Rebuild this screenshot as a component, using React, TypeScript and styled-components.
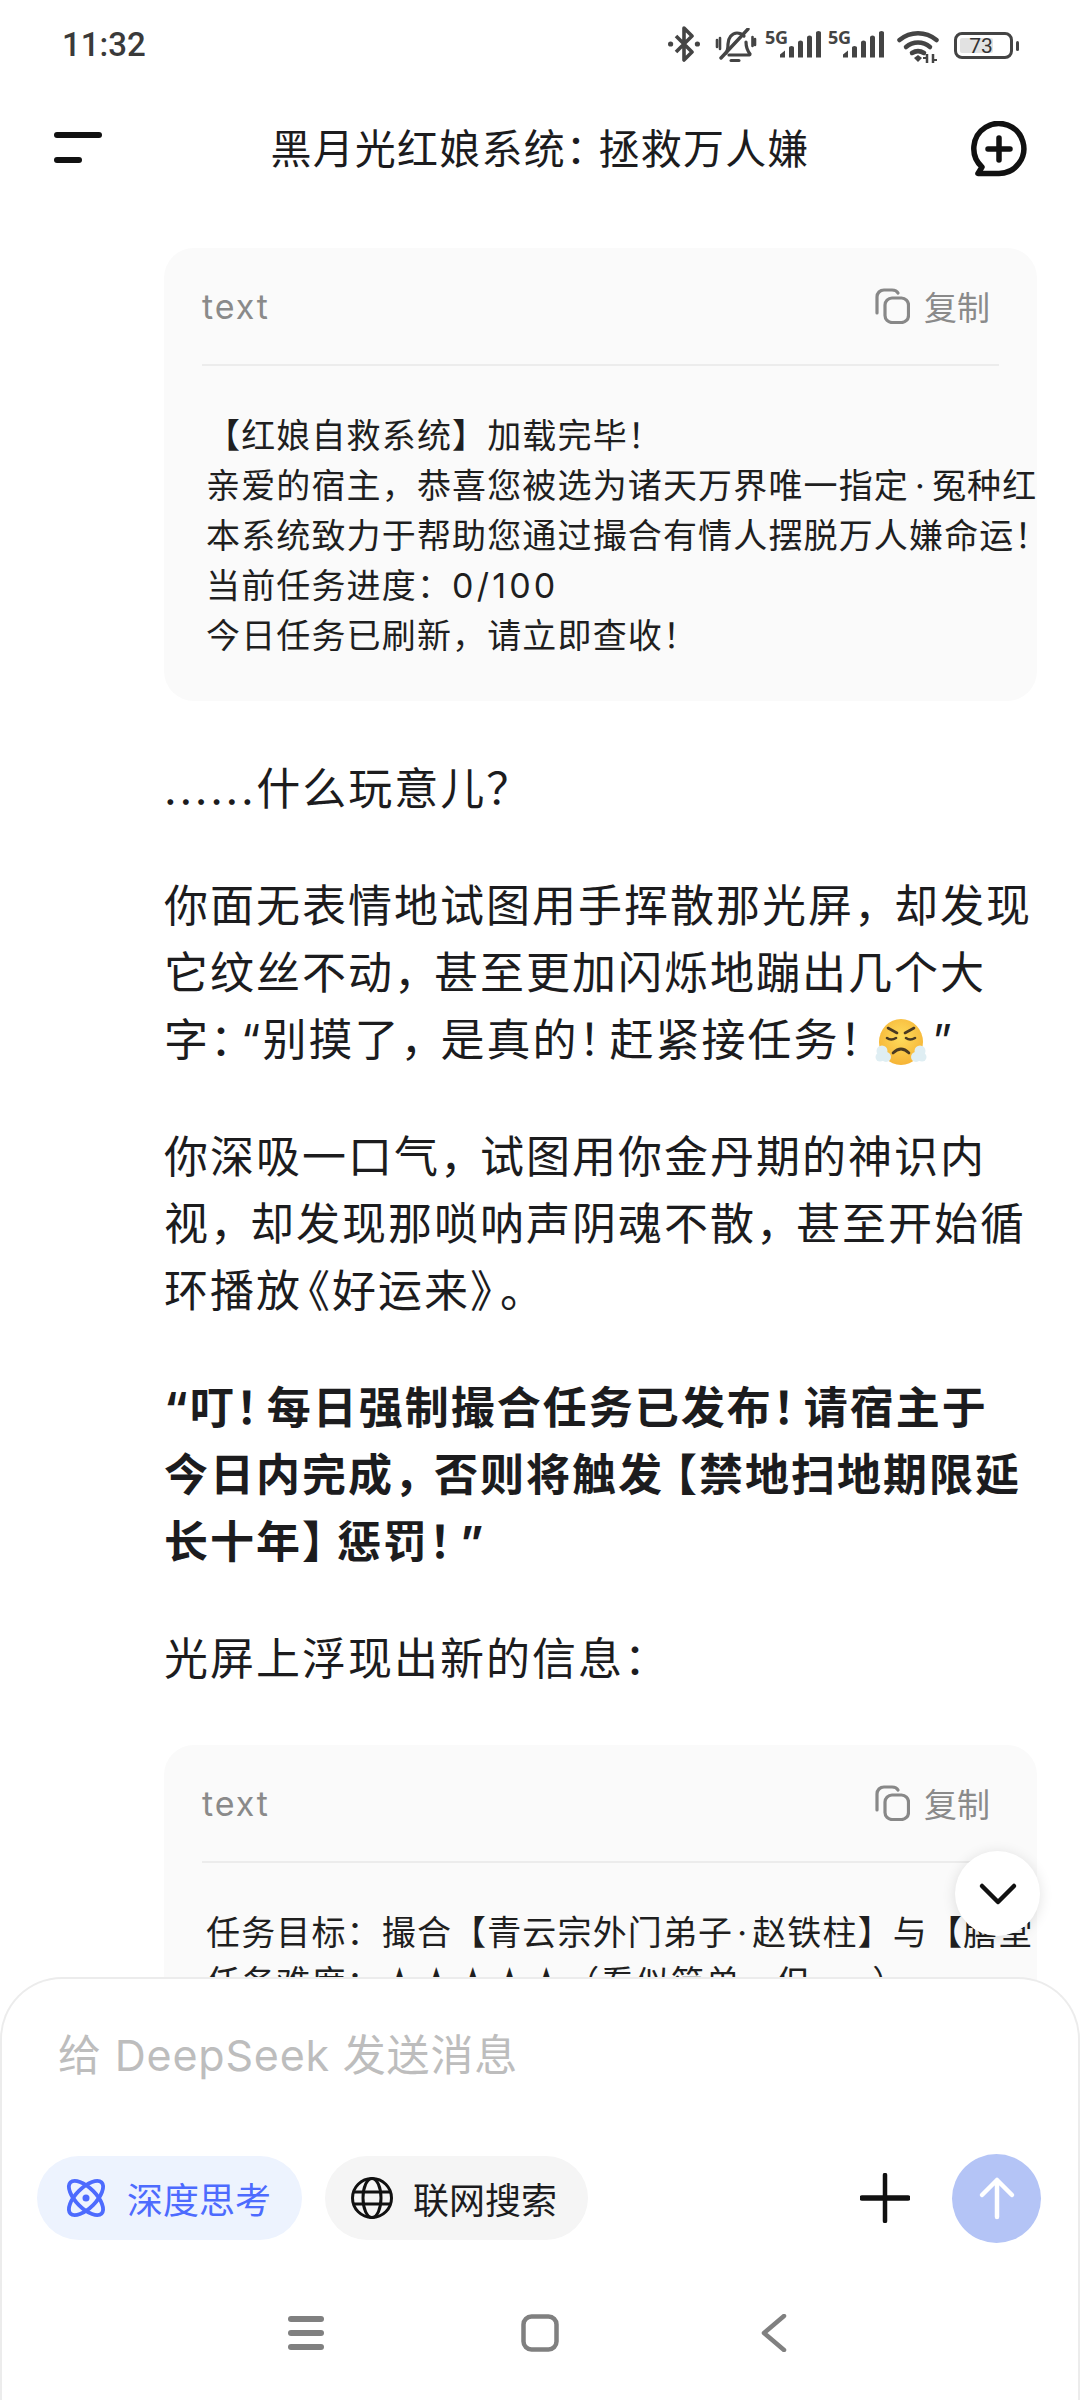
import React from "react";
import styled, { createGlobalStyle } from "styled-components";

const Global = createGlobalStyle`
  html, body { margin: 0; padding: 0; background: #fff; }
  * { box-sizing: border-box; }
  body { font-family: Inter, "Noto Sans CJK SC", sans-serif; }
`;

const Screen = styled.div`
  position: relative;
  width: 1080px;
  height: 2400px;
  overflow: hidden;
  background: #fff;
  color: #1c1c1e;
`;

const StatusBar = styled.div`
  height: 90px;
  padding: 27px 61px 0 62px;
  display: flex;
  justify-content: space-between;
  align-items: flex-start;
`;

const Time = styled.span`
  font-family: Roboto, sans-serif;
  font-size: 33px;
  line-height: 36px;
  font-weight: 500;
  color: #3a3a3a;
`;

const StatusIcons = styled.div`
  display: flex;
  align-items: flex-start;
  height: 40px;
`;

const IconSlot = styled.svg<{ $ml?: number }>`
  display: block;
  flex: none;
  margin-left: ${(p) => p.$ml ?? 0}px;
`;

const BatteryWrap = styled.div`
  position: relative;
  width: 59px;
  height: 27px;
  margin: 5px 0 0 15px;
  border: 3px solid #444;
  border-radius: 8px;
  display: flex;
  align-items: center;
  justify-content: center;
  font-family: Roboto, sans-serif;
  font-size: 21px;
  color: #333;
  padding: 2px;
`;

const BatteryFill = styled.div`
  position: absolute;
  left: 3px;
  top: 3px;
  bottom: 3px;
  width: 33px;
  background: #e2e2e2;
  border-radius: 2px;
`;

const BatteryText = styled.span`
  position: relative;
  margin-right: 5px;
`;

const BatteryNub = styled.div`
  width: 3px;
  height: 10px;
  margin: 14px 0 0 3px;
  background: #444;
  border-radius: 2px;
`;

const Header = styled.header`
  height: 116px;
  padding: 2px 52px 0 54px;
  display: flex;
  align-items: center;
  justify-content: space-between;
`;

const MenuButton = styled.div`
  width: 56px;
  display: flex;
  flex-direction: column;
  gap: 19px;
  margin-top: -4px;
`;

const MenuBar = styled.span<{ $w: number }>`
  display: block;
  width: ${(p) => p.$w}px;
  height: 6px;
  background: #111;
  border-radius: 3px;
`;

const Title = styled.h1`
  margin: 0;
  font-size: 41px;
  line-height: 56px;
  font-weight: 400;
  letter-spacing: 1.2px;
  font-feature-settings: "halt";
  color: #1c1c1e;
`;

const Main = styled.main`
  padding: 42px 43px 0 164px;
`;

const CodeCard = styled.section<{ $mt?: number }>`
  margin-top: ${(p) => p.$mt ?? 0}px;
  background: #fafafa;
  border-radius: 30px;
  overflow: hidden;
  padding: 0 38px;
`;

const CodeHead = styled.div`
  height: 118px;
  display: flex;
  align-items: center;
  justify-content: space-between;
  border-bottom: 2px solid #ececec;
  padding-right: 9px;
`;

const Lang = styled.span`
  font-size: 34px;
  letter-spacing: 1.9px;
  color: #8a8a8a;
`;

const CopyBtn = styled.span`
  display: flex;
  align-items: center;
  gap: 14px;
  font-size: 33px;
  color: #8a8a8a;
`;

const CodeBody = styled.div`
  margin: 45px -38px 0 4px;
  padding: 0 0 40px;
  overflow: hidden;
`;

const CodeLine = styled.div`
  font-size: 34px;
  line-height: 50px;
  letter-spacing: 1.15px;
  color: #1f1f1f;
  white-space: nowrap;
`;

const MidDot = styled.span<{ $gap?: number }>`
  margin: 0 ${(p) => p.$gap ?? 4}px;
`;

const Digits = styled.span`
  letter-spacing: 3.2px;
`;

const Para = styled.p<{ $mt?: number; $bold?: boolean }>`
  margin: ${(p) => p.$mt ?? 50}px 0 0;
  font-size: 44px;
  line-height: 67px;
  letter-spacing: 2px;
  font-weight: ${(p) => (p.$bold ? 700 : 400)};
  font-feature-settings: "halt";
  color: #1c1c1e;
`;

const ParaLine = styled.span`
  display: block;
  white-space: nowrap;
`;

const Dots = styled.span`
  letter-spacing: 2.7px;
`;

const Punct = styled.span<{ $before?: number; $after?: number }>`
  margin-left: ${(p) => p.$before ?? 0}px;
  margin-right: ${(p) => p.$after ?? 0}px;
`;

const Emoji = styled.svg`
  display: inline-block;
  width: 52px;
  height: 50px;
  vertical-align: -12px;
  margin: 0 5px 0 5px;
`;

const ScrollDown = styled.div`
  position: absolute;
  left: 955px;
  top: 1851px;
  width: 85px;
  height: 85px;
  border-radius: 50%;
  background: #fff;
  box-shadow: 0 2px 14px rgba(0, 0, 0, 0.12);
  display: flex;
  align-items: center;
  justify-content: center;
`;

const Composer = styled.div`
  position: absolute;
  left: 0;
  right: 0;
  bottom: 0;
  height: 423px;
  background: #fff;
  border: 2px solid #ececec;
  border-bottom: none;
  border-radius: 62px 62px 0 0;
  display: flex;
  flex-direction: column;
`;

const Placeholder = styled.div`
  margin: 49px 0 0 56px;
  height: 55px;
  font-size: 43px;
  line-height: 55px;
  letter-spacing: 0.8px;
  color: #bdbdbd;
`;

const Controls = styled.div`
  margin-top: 70px;
  padding: 0 37px 0 35px;
  height: 90px;
  display: flex;
  align-items: center;
  gap: 23px;
`;

const Chip = styled.div<{ $active?: boolean }>`
  height: 84px;
  border-radius: 42px;
  padding: 0 31px 0 ${(p) => (p.$active ? 28 : 26)}px;
  display: flex;
  align-items: center;
  gap: 20px;
  font-size: 36px;
  white-space: nowrap;
  background: ${(p) => (p.$active ? "#edf3fe" : "#f5f5f5")};
  color: ${(p) => (p.$active ? "#4d6bfe" : "#1c1c1e")};
`;

const Spacer = styled.div`
  flex: 1;
`;

const PlusBtn = styled.svg`
  display: block;
  flex: none;
  margin-right: 19px;
`;

const SendBtn = styled.div`
  width: 89px;
  height: 89px;
  flex: none;
  border-radius: 50%;
  background: #b4c4f6;
  display: flex;
  align-items: center;
  justify-content: center;
`;

const NavBar = styled.nav`
  margin-top: 71px;
  display: flex;
  justify-content: center;
  align-items: center;
  gap: 194px;
`;

const NavSlot = styled.div`
  width: 40px;
  height: 38px;
  display: flex;
  align-items: center;
  justify-content: center;
`;

const SPACING: Record<string, { before?: number; after?: number }> = {
  "，": { after: 16 },
  "：": { after: 7 },
  "！": { after: 7 },
  "？": { after: 3 },
  "【": { before: 11 },
  "】": { after: 11 },
  "《": { before: 6 },
  "》": { after: 6 },
};

const spaced = (text: string) =>
  text.split(/([，：！？【】《》])/).map((part, i) =>
    SPACING[part] ? (
      <Punct key={i} $before={SPACING[part].before} $after={SPACING[part].after}>
        {part}
      </Punct>
    ) : (
      part
    )
  );

const Bluetooth = () => (
  <IconSlot width="32" height="36" viewBox="0 0 32 36" style={{ marginTop: -1 }}>
    <path d="M8 10l16 16-8 8V2l8 8L8 26" fill="none" stroke="#444" strokeWidth="3.6" strokeLinejoin="round" />
    <circle cx="2.6" cy="18" r="2.6" fill="#444" />
    <circle cx="29.4" cy="18" r="2.6" fill="#444" />
  </IconSlot>
);

const Bell = () => (
  <IconSlot $ml={15} width="42" height="35" viewBox="0 0 42 35" style={{ marginTop: 1 }}>
    <g fill="none" stroke="#444" strokeLinecap="round">
      <path d="M2 12v7M37.5 9v9M40 11v6M5 10v11" strokeWidth="2.6" />
      <path d="M11 25c2-3 2-5 2-9 0-6 4-11 9-11 3 0 5 1 7 3M31 14c0 5 1 8 4 12 0 1-1 1-2 1H14" strokeWidth="3.2" />
      <path d="M6 30L33 1" strokeWidth="3.4" />
      <path d="M16 32.5h8" strokeWidth="3" />
    </g>
  </IconSlot>
);

const FiveGLabel = styled.span`
  position: absolute;
  left: 0;
  top: 0;
  font-family: "Open Sans", sans-serif;
  font-weight: 700;
  font-size: 18px;
  line-height: 20px;
  letter-spacing: -0.3px;
  color: #444;
`;

const SignalWrap = styled.div<{ $ml: number }>`
  position: relative;
  width: 56px;
  height: 36px;
  margin-left: ${(p) => p.$ml}px;
`;

const SignalBars = styled.svg`
  position: absolute;
  right: 0;
  top: 4px;
`;

const Signal = ({ ml }: { ml: number }) => (
  <SignalWrap $ml={ml}>
    <FiveGLabel>5G</FiveGLabel>
    <SignalBars width="41" height="27" viewBox="0 0 41 27">
      <path d="M0 26.5v-3l5-4v7zM9 26.5v-10q0-1.500 2.500-1.500T14 16.500v10zM18 26.5v-15q0-2 2.500-2t2.500 2v15zM27 26.5v-20q0-2 2.500-2t2.500 2v20zM36 26.500v-25q0-1.500 2.500-1.500t2.500 1.500v25z" fill="#444" />
    </SignalBars>
  </SignalWrap>
);

const Wifi = () => (
  <IconSlot $ml={13} width="42" height="34" viewBox="0 0 42 34" style={{ marginTop: 3 }}>
    <g fill="none" stroke="#444" strokeWidth="4.500" strokeLinecap="round">
      <path d="M2.500 10c11-9 26-9 37 0" />
      <path d="M9 17c7-6 17-6 24 0" />
      <path d="M15 23c4-2.500 8-2.500 12 0" />
    </g>
    <path d="M17 28l4-3 4 3-4 4z" fill="#444" />
    <path d="M30 24v9M36 24v9" stroke="#444" strokeWidth="2.500" />
    <path d="M26 28h4M36 30h4" stroke="#444" strokeWidth="2" />
  </IconSlot>
);

const CopyIcon = () => (
  <svg width="36" height="36" viewBox="0 0 36 36" fill="none" stroke="#888" strokeWidth="3.2" strokeLinecap="round">
    <rect x="11" y="10" width="23.500" height="24.500" rx="7" />
    <path d="M3 25V9c0-4 3-7 7-7h8c3 0 5 1 6 3" />
  </svg>
);

const CodeHeader = () => (
  <CodeHead>
    <Lang>text</Lang>
    <CopyBtn>
      <CopyIcon />
      复制
    </CopyBtn>
  </CodeHead>
);

const AngryEmoji = () => (
  <Emoji viewBox="0 0 52 50" role="img" aria-label="😤">
    <defs>
      <radialGradient id="face" cx="50%" cy="40%" r="60%">
        <stop offset="0%" stopColor="#fedc5c" />
        <stop offset="100%" stopColor="#f6b436" />
      </radialGradient>
    </defs>
    <ellipse cx="26" cy="24" rx="22" ry="23" fill="url(#face)" />
    <g fill="none" stroke="#4a3a22" strokeWidth="2.600" strokeLinecap="round">
      <path d="M13 10l9 5M39 10l-9 5" />
      <path d="M12 20q4 3 9 0M31 20q4 3 9 0" />
      <path d="M18 35q8-8 16 0" />
    </g>
    <g fill="#dfeef3">
      <circle cx="7" cy="33" r="5.500" />
      <circle cx="11" cy="39" r="5" />
      <circle cx="5" cy="39" r="4.500" />
      <circle cx="45" cy="33" r="5.500" />
      <circle cx="41" cy="39" r="5" />
      <circle cx="47" cy="39" r="4.500" />
    </g>
  </Emoji>
);

export default function App() {
  return (
    <Screen>
      <Global />
      <StatusBar>
        <Time>11:32</Time>
        <StatusIcons>
          <Bluetooth />
          <Bell />
          <Signal ml={8} />
          <Signal ml={7} />
          <Wifi />
          <BatteryWrap>
            <BatteryFill />
            <BatteryText>73</BatteryText>
          </BatteryWrap>
          <BatteryNub />
        </StatusIcons>
      </StatusBar>

      <Header>
        <MenuButton>
          <MenuBar $w={48} />
          <MenuBar $w={28} />
        </MenuButton>
        <Title>
          黑月光红娘系统<Punct $after={11}>：</Punct>拯救万人嫌
        </Title>
        <svg width="58" height="56" viewBox="0 0 58 56" fill="none" stroke="#111" strokeWidth="5.500" strokeLinecap="round" strokeLinejoin="round">
          <path d="M29 52.500A25 25 0 1 0 12 46L8 52.500H29" />
          <path d="M18 28h22M29 17v22" />
        </svg>
      </Header>

      <Main>
        <CodeCard>
          <CodeHeader />
          <CodeBody>
            <CodeLine>【红娘自救系统】加载完毕！</CodeLine>
            <CodeLine>
              亲爱的宿主，恭喜您被选为诸天万界唯一指定<MidDot $gap={6}>·</MidDot>冤种红
            </CodeLine>
            <CodeLine>本系统致力于帮助您通过撮合有情人摆脱万人嫌命运！</CodeLine>
            <CodeLine>
              当前任务进度：<Digits>0/100</Digits>
            </CodeLine>
            <CodeLine>今日任务已刷新，请立即查收！</CodeLine>
          </CodeBody>
        </CodeCard>

        <Para $mt={55}>
          <ParaLine>
            <Dots>......</Dots>
            {spaced("什么玩意儿？")}
          </ParaLine>
        </Para>
        <Para>
          <ParaLine>{spaced("你面无表情地试图用手挥散那光屏，却发现")}</ParaLine>
          <ParaLine>{spaced("它纹丝不动，甚至更加闪烁地蹦出几个大")}</ParaLine>
          <ParaLine>
            {spaced("字：“别摸了，是真的！赶紧接任务！")}
            <AngryEmoji />”
          </ParaLine>
        </Para>
        <Para>
          <ParaLine>{spaced("你深吸一口气，试图用你金丹期的神识内")}</ParaLine>
          <ParaLine>{spaced("视，却发现那唢呐声阴魂不散，甚至开始循")}</ParaLine>
          <ParaLine>{spaced("环播放《好运来》。")}</ParaLine>
        </Para>
        <Para $bold>
          <ParaLine>{spaced("“叮！每日强制撮合任务已发布！请宿主于")}</ParaLine>
          <ParaLine>{spaced("今日内完成，否则将触发【禁地扫地期限延")}</ParaLine>
          <ParaLine>{spaced("长十年】惩罚！”")}</ParaLine>
        </Para>
        <Para>
          <ParaLine>{spaced("光屏上浮现出新的信息：")}</ParaLine>
        </Para>

        <CodeCard $mt={52}>
          <CodeHeader />
          <CodeBody>
            <CodeLine>
              任务目标：撮合【青云宗外门弟子<MidDot>·</MidDot>赵铁柱】与【膳堂
            </CodeLine>
            <CodeLine>任务难度：★★★★★（看似简单，但……）</CodeLine>
          </CodeBody>
        </CodeCard>
      </Main>

      <ScrollDown>
        <svg width="40" height="24" viewBox="0 0 40 24" fill="none" stroke="#111" strokeWidth="4.500" strokeLinecap="round" strokeLinejoin="round">
          <path d="M4 4l16 16L36 4" />
        </svg>
      </ScrollDown>

      <Composer>
        <Placeholder>给 DeepSeek 发送消息</Placeholder>
        <Controls>
          <Chip $active>
            <svg width="42" height="42" viewBox="0 0 42 42" fill="none" stroke="#4d6bfe" strokeWidth="3.800">
              <ellipse cx="21" cy="21" rx="10" ry="22" transform="rotate(45 21 21)" />
              <ellipse cx="21" cy="21" rx="10" ry="22" transform="rotate(-45 21 21)" />
              <circle cx="21" cy="21" r="3.500" fill="#4d6bfe" stroke="none" />
            </svg>
            深度思考
          </Chip>
          <Chip>
            <svg width="42" height="42" viewBox="0 0 42 42" fill="none" stroke="#111" strokeWidth="3">
              <circle cx="21" cy="21" r="19.500" />
              <ellipse cx="21" cy="21" rx="9" ry="19.500" />
              <path d="M3 15h36M3 27h36" />
            </svg>
            联网搜索
          </Chip>
          <Spacer />
          <PlusBtn width="50" height="50" viewBox="0 0 50 50" fill="none" stroke="#111" strokeLinecap="round">
            <path d="M2 25h46" strokeWidth="5.500" />
            <path d="M25 2v46" strokeWidth="4.500" />
          </PlusBtn>
          <SendBtn>
            <svg width="40" height="44" viewBox="0 0 40 44" fill="none" stroke="#fff" strokeWidth="4.500" strokeLinecap="round" strokeLinejoin="round">
              <path d="M20 41V4M5 19L20 4l15 15" />
            </svg>
          </SendBtn>
        </Controls>
        <NavBar>
          <NavSlot>
            <svg width="36" height="36" viewBox="0 0 36 36" fill="#808080">
              <rect y="1" width="36" height="6" rx="3" />
              <rect y="15" width="36" height="6" rx="3" />
              <rect y="29" width="36" height="6" rx="3" />
            </svg>
          </NavSlot>
          <NavSlot>
            <svg width="38" height="38" viewBox="0 0 38 38" fill="none" stroke="#808080" strokeWidth="4.500">
              <rect x="2.500" y="2.500" width="33" height="33" rx="8" />
            </svg>
          </NavSlot>
          <NavSlot>
            <svg width="26" height="38" viewBox="0 0 26 38" fill="none" stroke="#808080" strokeWidth="4.500" strokeLinecap="round" strokeLinejoin="round">
              <path d="M23 2L3 19l20 17" />
            </svg>
          </NavSlot>
        </NavBar>
      </Composer>
    </Screen>
  );
}
